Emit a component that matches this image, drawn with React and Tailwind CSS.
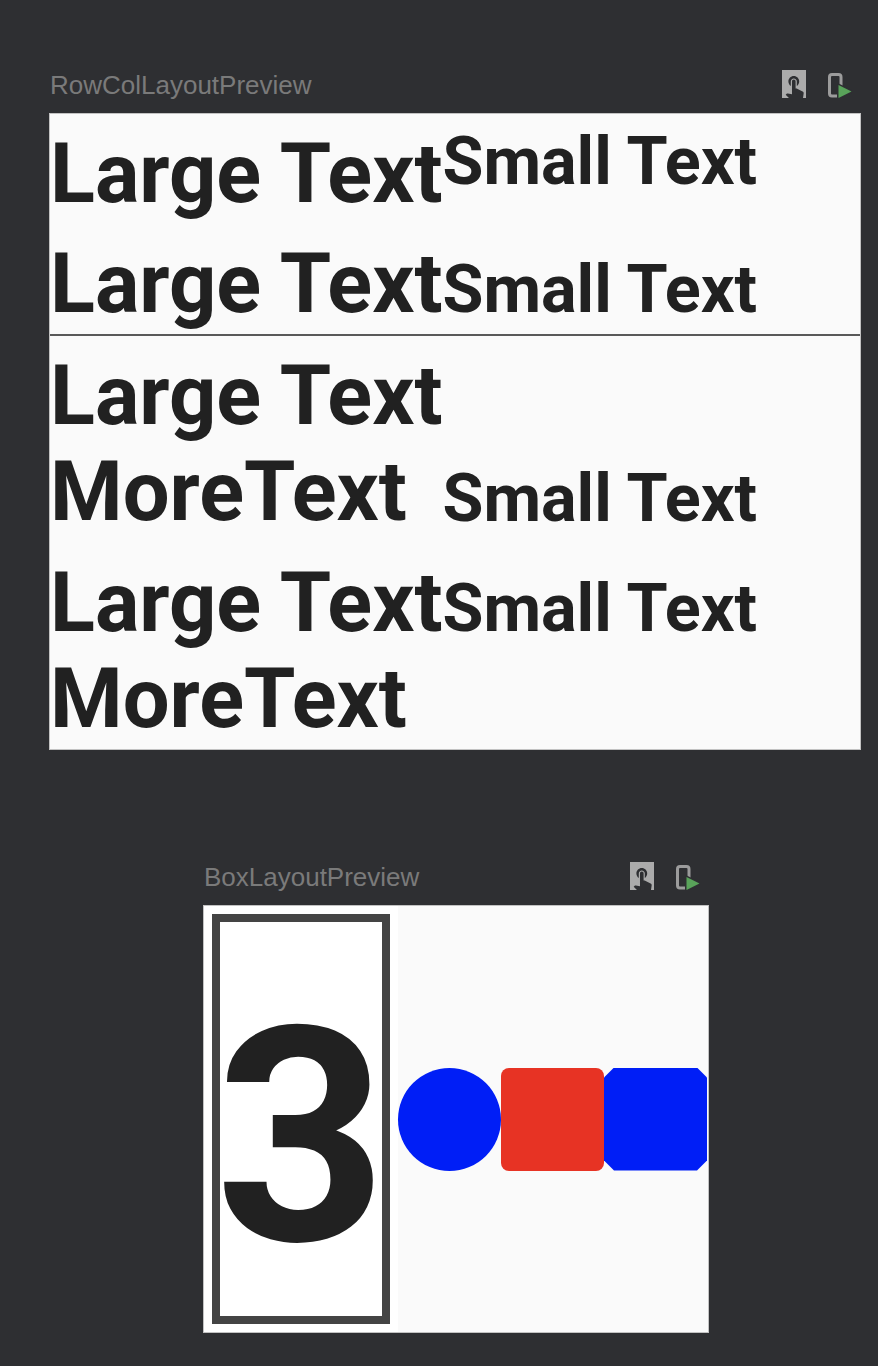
import React from "react";

const TouchIcon = () => (
  <div className="w-[24px] h-[28px] bg-[#ababab] overflow-hidden">
    <svg width="24" height="28" viewBox="1.67 -2 20 23.33" fill="#2e2f32">
      <path d="M9 11.24V7.5C9 6.12 10.12 5 11.5 5S14 6.12 14 7.5v3.74c1.21-.81 2-2.18 2-3.74C16 5.01 13.99 3 11.5 3S7 5.01 7 7.5c0 1.56.79 2.930 2 3.74zm9.84 4.63l-4.54-2.26c-.17-.07-.35-.11-.54-.11H13v-6c0-.83-.67-1.5-1.5-1.5S10 6.67 10 7.5v10.74l-3.43-.72c-.08-.01-.15-.03-.24-.03-.31 0-.59.13-.79.330l-.79.8 4.94 4.94c.27.27.65.44 1.06.44h6.79c.75 0 1.33-.55 1.44-1.28l.75-5.27c.01-.07.02-.14.02-.2 0-.62-.38-1.16-.91-1.38z" />
    </svg>
  </div>
);

const RunIcon = () => (
  <svg width="24" height="28" viewBox="0 0 24 28">
    <rect x="1.5" y="4.5" width="11.5" height="21.5" rx="2.5" fill="none" stroke="#9c9c9c" strokeWidth="3" />
    <polygon points="10.5,15 23.5,21.5 10.5,28" fill="#2e2f32" stroke="#2e2f32" strokeWidth="3" strokeLinejoin="round" />
    <polygon points="10.5,15 23.5,21.5 10.5,28" fill="#59a35a" />
  </svg>
);

const Header = ({ title }) => (
  <div className="flex justify-between items-start mb-[12px]">
    <span className="pl-[1px] text-[26px] leading-[31px] text-[#7a7a7a] font-['Liberation_Sans',Arial,sans-serif]">
      {title}
    </span>
    <div className="flex gap-[22px] pr-[9px]">
      <TouchIcon />
      <RunIcon />
    </div>
  </div>
);

const App = () => {
  return (
    <div className="min-h-[1366px] bg-[#2e2f32] pt-[70px] font-['Roboto',sans-serif] text-[#212121]">
      {/* row / column preview */}
      <div className="ml-[49px] w-[812px]">
        <Header title="RowColLayoutPreview" />
        <div className="bg-[#fafafa] border border-[#c2c2c2] whitespace-nowrap">
          {/* row top aligned */}
          <div className="flex items-start h-[110px]">
            <span className="text-[83px] font-bold leading-[97px] mt-[11px]">Large Text</span>
            <span className="text-[66.5px] font-bold leading-[78px] mt-[8px]">Small Text</span>
          </div>

          {/* row baseline aligned */}
          <div className="flex items-baseline h-[110px] pt-[11px]">
            <span className="text-[83px] font-bold leading-[97px]">Large Text</span>
            <span className="text-[66.5px] font-bold leading-[78px]">Small Text</span>
          </div>

          <div className="h-[2px] bg-[#595959]" />

          {/* column + last baseline */}
          <div className="flex items-end pt-[12px] pb-[2px]">
            <div className="text-[83px] font-bold leading-[96px]">
              <div>Large Text</div>
              <div>MoreText</div>
            </div>
            <span className="text-[66.5px] font-bold leading-[78px] mb-[3px]">Small Text</span>
          </div>

          {/* column + first baseline */}
          <div className="flex items-baseline pt-[13px] pb-[2px]">
            <div className="text-[83px] font-bold leading-[96px]">
              <div>Large Text</div>
              <div>MoreText</div>
            </div>
            <span className="text-[66.5px] font-bold leading-[78px]">Small Text</span>
          </div>
        </div>
      </div>

      {/* box preview */}
      <div className="ml-[203px] w-[506px] mt-[112px]">
        <Header title="BoxLayoutPreview" />
        <div className="flex h-[428px] bg-[#fafafa] border border-[#c2c2c2]">
          <div className="w-[194px] bg-white p-[8px]">
            <div className="h-full border-[8px] border-[#444444] flex items-center justify-center pt-[38px]">
              <span className="text-[300px] font-bold leading-normal">3</span>
            </div>
          </div>
          <div className="flex-1 flex items-center">
            <div className="w-[103px] h-[103px] rounded-full bg-[#001ef6]" />
            <div className="w-[103px] h-[103px] rounded-[8px] bg-[#e73324]" />
            <div className="w-[103px] h-[103px] bg-[#001ef6] [clip-path:polygon(10px_0,93px_0,103px_10px,103px_93px,93px_103px,10px_103px,0_93px,0_10px)]" />
          </div>
        </div>
      </div>
    </div>
  );
};

export default App;
